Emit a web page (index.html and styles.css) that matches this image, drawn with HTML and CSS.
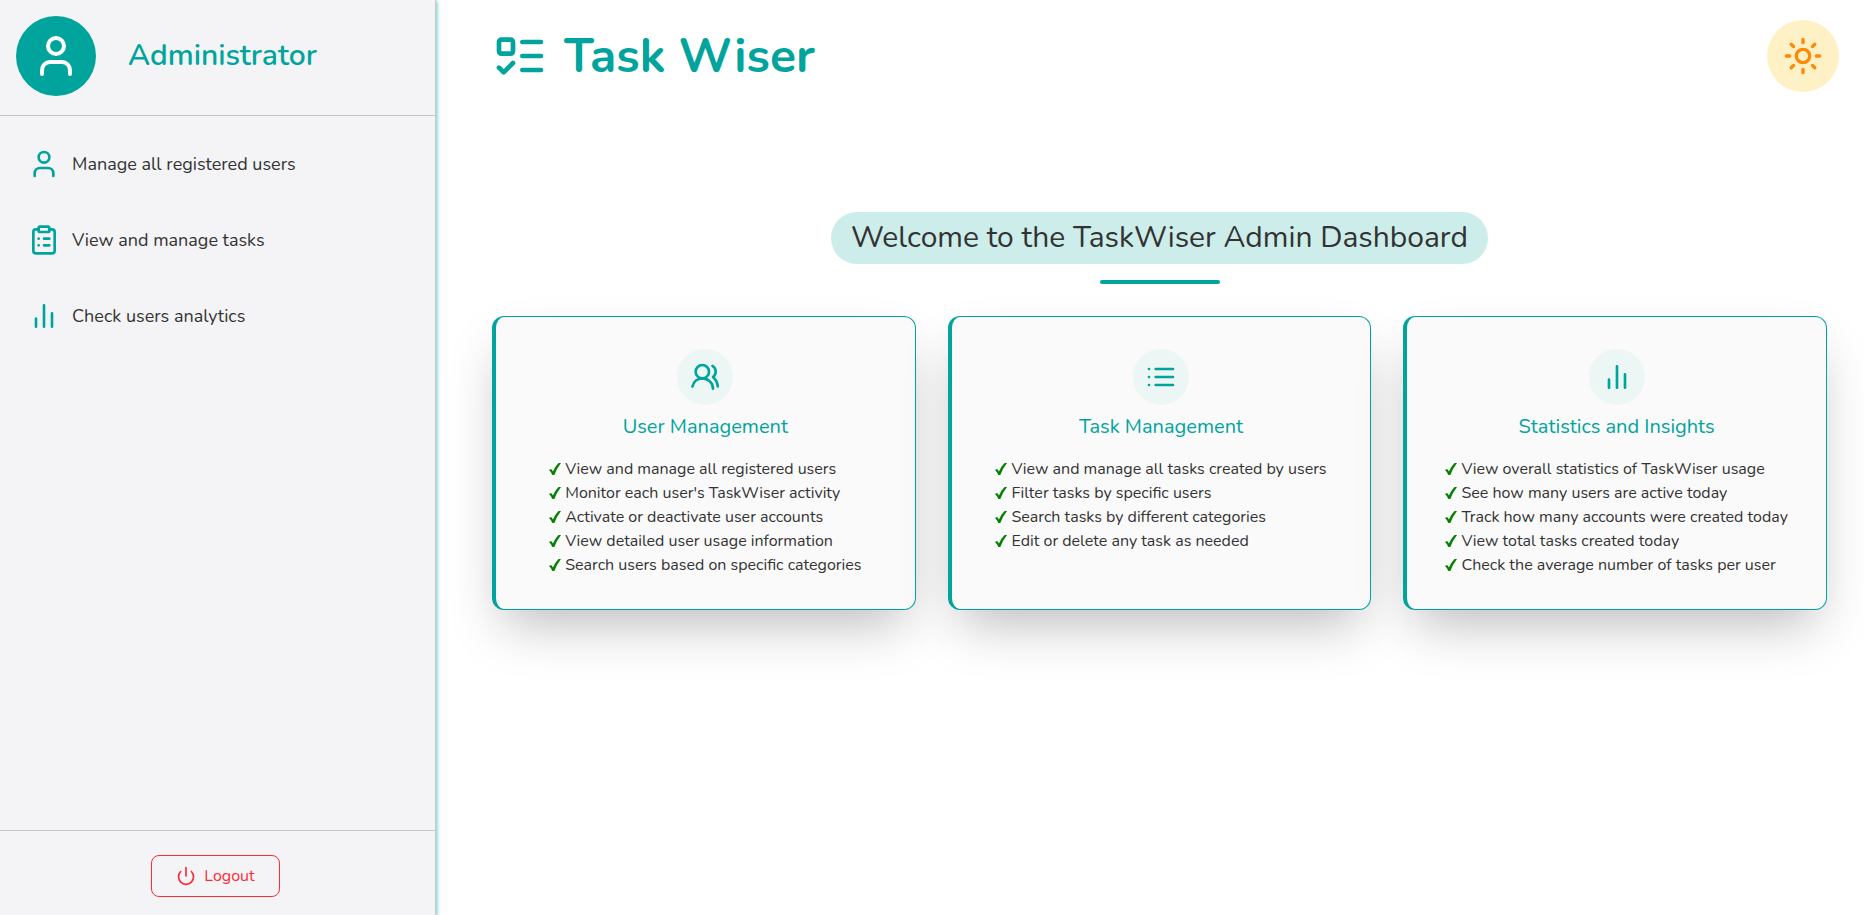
FILE: index.html
```
<!DOCTYPE html>
<html lang="en">
<head>
<meta charset="utf-8">
<meta name="viewport" content="width=device-width, initial-scale=1">
<title>Task Wiser</title>
<link rel="stylesheet" href="styles.css">
</head>
<body>
<svg class="sprite" aria-hidden="true">
  <symbol id="user" viewBox="0 0 24 24"><path d="M19 21v-2a4 4 0 0 0-4-4H9a4 4 0 0 0-4 4v2"/><circle cx="12" cy="7" r="4"/></symbol>
  <symbol id="clipboard" viewBox="0 0 24 24"><rect x="8" y="2" width="8" height="4" rx="1"/><path d="M16 4h2a2 2 0 0 1 2 2v14a2 2 0 0 1-2 2H6a2 2 0 0 1-2-2V6a2 2 0 0 1 2-2h2M12 11h4M12 16h4M8 11h.01M8 16h.01"/></symbol>
  <symbol id="chart" viewBox="0 0 24 24"><path d="M18 20V10M12 20V4M6 20v-6"/></symbol>
  <symbol id="power" viewBox="0 0 24 24"><path d="M12 2v10M18.4 6.6a9 9 0 1 1-12.77.04"/></symbol>
  <symbol id="todo" viewBox="0 0 24 24"><rect x="3" y="5" width="6" height="6" rx="1"/><path d="m3 17 2 2 4-4M13 6h8M13 12h8M13 18h8"/></symbol>
  <symbol id="sun" viewBox="0 0 24 24"><circle cx="12" cy="12" r="4"/><path d="M12 2v2M12 20v2M4.93 4.93l1.41 1.41M17.66 17.66l1.41 1.41M2 12h2M20 12h2M6.34 17.66l-1.41 1.41M19.07 4.93l-1.41 1.41"/></symbol>
  <symbol id="users" viewBox="0 0 24 24"><circle cx="10" cy="8" r="5"/><path d="M18 20.8a8 7.8 0 0 0-8-7.8c-3.6 0-6.6 2.4-7.4 6.2M21.6 19c-.3-2.800-1.700-5.300-3.600-7a5 5 0 0 0-.4-8.300"/></symbol>
  <symbol id="list" viewBox="0 0 24 24"><path d="M8 6h13M8 12h13M8 18h13M3 6h.01M3 12h.01M3 18h.01"/></symbol>
  <symbol id="check" viewBox="0 0 12 12"><path d="M0 7 2 6Q3.300 7 4 8.500Q6 3.500 9.600 0H12Q8 5 5.300 12H3.400Q2.300 9 0 7Z"/></symbol>
</svg>
<div class="layout">
  <aside class="sidebar">
    <div class="profile">
      <span class="avatar"><svg class="icon icon-lg"><use href="#user"/></svg></span>
      <h2 class="role">Administrator</h2>
    </div>
    <nav class="nav">
      <a class="nav-link" href="#users-page"><svg class="icon"><use href="#user"/></svg>Manage all registered users</a>
      <a class="nav-link" href="#tasks-page"><svg class="icon"><use href="#clipboard"/></svg>View and manage tasks</a>
      <a class="nav-link" href="#analytics-page"><svg class="icon"><use href="#chart"/></svg>Check users analytics</a>
    </nav>
    <div class="sidebar-foot">
      <button class="logout" type="button"><svg class="icon icon-sm"><use href="#power"/></svg>Logout</button>
    </div>
  </aside>
  <main class="main">
    <header class="topbar">
      <div class="brand"><svg class="icon icon-xl"><use href="#todo"/></svg><h1 class="brand-name">Task Wiser</h1></div>
      <button class="theme" type="button" aria-label="Toggle theme"><svg class="icon icon-md"><use href="#sun"/></svg></button>
    </header>
    <section class="content">
      <h2 class="welcome">Welcome to the TaskWiser Admin Dashboard</h2>
      <div class="rule"></div>
      <div class="cards">
        <article class="card">
          <span class="badge"><svg class="icon"><use href="#users"/></svg></span>
          <h3 class="card-title">User Management</h3>
          <ul class="features">
            <li><svg class="check"><use href="#check"/></svg>View and manage all registered users</li>
            <li><svg class="check"><use href="#check"/></svg>Monitor each user's TaskWiser activity</li>
            <li><svg class="check"><use href="#check"/></svg>Activate or deactivate user accounts</li>
            <li><svg class="check"><use href="#check"/></svg>View detailed user usage information</li>
            <li><svg class="check"><use href="#check"/></svg>Search users based on specific categories</li>
          </ul>
        </article>
        <article class="card">
          <span class="badge"><svg class="icon"><use href="#list"/></svg></span>
          <h3 class="card-title">Task Management</h3>
          <ul class="features">
            <li><svg class="check"><use href="#check"/></svg>View and manage all tasks created by users</li>
            <li><svg class="check"><use href="#check"/></svg>Filter tasks by specific users</li>
            <li><svg class="check"><use href="#check"/></svg>Search tasks by different categories</li>
            <li><svg class="check"><use href="#check"/></svg>Edit or delete any task as needed</li>
          </ul>
        </article>
        <article class="card">
          <span class="badge"><svg class="icon"><use href="#chart"/></svg></span>
          <h3 class="card-title">Statistics and Insights</h3>
          <ul class="features">
            <li><svg class="check"><use href="#check"/></svg>View overall statistics of TaskWiser usage</li>
            <li><svg class="check"><use href="#check"/></svg>See how many users are active today</li>
            <li><svg class="check"><use href="#check"/></svg>Track how many accounts were created today</li>
            <li><svg class="check"><use href="#check"/></svg>View total tasks created today</li>
            <li><svg class="check"><use href="#check"/></svg>Check the average number of tasks per user</li>
          </ul>
        </article>
      </div>
    </section>
  </main>
</div>
</body>
</html>
```
FILE: styles.css
```
:root {
  --teal: #00a49c;
  --text: #333;
  --line: #c8c8cb;
}
* { box-sizing: border-box; }
body {
  margin: 0;
  background: #fff;
  color: var(--text);
  font: 400 16px/24px Nunito, Lato, sans-serif;
}
h1, h2, h3, ul { margin: 0; padding: 0; font-weight: 400; }
button { font: inherit; cursor: pointer; }
.sprite { position: absolute; width: 0; height: 0; }
.icon {
  flex: none;
  width: 32px;
  height: 32px;
  fill: none;
  stroke: currentColor;
  stroke-width: 2;
  stroke-linecap: round;
  stroke-linejoin: round;
}
.icon-sm { width: 20px; height: 20px; }
.icon-md { width: 40px; height: 40px; }
.icon-lg { width: 48px; height: 48px; }
.icon-xl { width: 56px; height: 56px; }

.layout { display: flex; min-height: 100vh; }
.sidebar {
  display: flex;
  flex-direction: column;
  flex: none;
  width: 436px;
  background: #f4f4f7;
  border-right: 1px solid var(--line);
  box-shadow: 1px 1px 4px rgba(0, 164, 156, .6);
}
.profile {
  display: flex;
  align-items: center;
  gap: 32px;
  padding: 16px 16px 19px;
  border-bottom: 1px solid var(--line);
}
.avatar {
  display: grid;
  place-items: center;
  width: 80px;
  height: 80px;
  border-radius: 50%;
  background: var(--teal);
  color: #fff;
}
.role { color: var(--teal); font-size: 30px; line-height: 36px; font-weight: 600; }
.nav {
  display: flex;
  flex-direction: column;
  gap: 24px;
  padding: 22px 28px;
}
.nav-link {
  display: flex;
  align-items: center;
  gap: 12px;
  padding: 10px 0;
  color: var(--text);
  font-size: 18px;
  line-height: 28px;
  text-decoration: none;
}
.nav-link .icon { color: var(--teal); }
.sidebar-foot {
  display: flex;
  justify-content: center;
  margin-top: auto;
  padding: 24px 4px 18px 0;
  border-top: 1px solid var(--line);
}
.logout {
  display: flex;
  align-items: center;
  gap: 8px;
  padding: 8px 24px;
  border: 1px solid #fb2c36;
  border-radius: 8px;
  background: transparent;
  color: #fb2c36;
}

.main { flex: 1; min-width: 0; }
.topbar {
  display: flex;
  align-items: center;
  justify-content: space-between;
  padding: 20px 25px 20px 56px;
}
.brand { display: flex; align-items: center; gap: 16px; color: var(--teal); }
.brand-name { font-size: 48px; line-height: 56px; font-weight: 700; }
.theme {
  display: grid;
  place-items: center;
  width: 72px;
  height: 72px;
  padding: 0;
  border: 0;
  border-radius: 50%;
  background: #fff1c6;
  color: #ff8904;
}
.content {
  display: flex;
  flex-direction: column;
  align-items: center;
  padding: 100px 37px 48px 56px;
}
.welcome {
  padding: 8px 20px;
  border-radius: 26px;
  background: #ccedea;
  font-size: 30px;
  line-height: 36px;
}
.rule {
  width: 120px;
  height: 4px;
  margin: 16px 0 32px;
  border-radius: 2px;
  background: var(--teal);
}
.cards {
  display: grid;
  grid-template-columns: repeat(3, 1fr);
  gap: 32px;
  width: 100%;
}
.card {
  display: flex;
  flex-direction: column;
  align-items: center;
  padding: 32px 24px;
  border: 1px solid var(--teal);
  border-left-width: 4px;
  border-radius: 12px;
  background: #fafafa;
  box-shadow: 0 25px 50px -12px rgba(0, 0, 0, .27);
}
.badge {
  display: grid;
  place-items: center;
  width: 56px;
  height: 56px;
  border-radius: 50%;
  background: #ecf6f5;
  color: var(--teal);
}
.card-title {
  margin: 8px 0 16px;
  color: var(--teal);
  font-size: 20px;
  line-height: 28px;
}
.features { list-style: none; }
.features li { display: flex; align-items: center; gap: 4px; }
.check { flex: none; width: 12px; height: 12px; fill: #008000; }
```
